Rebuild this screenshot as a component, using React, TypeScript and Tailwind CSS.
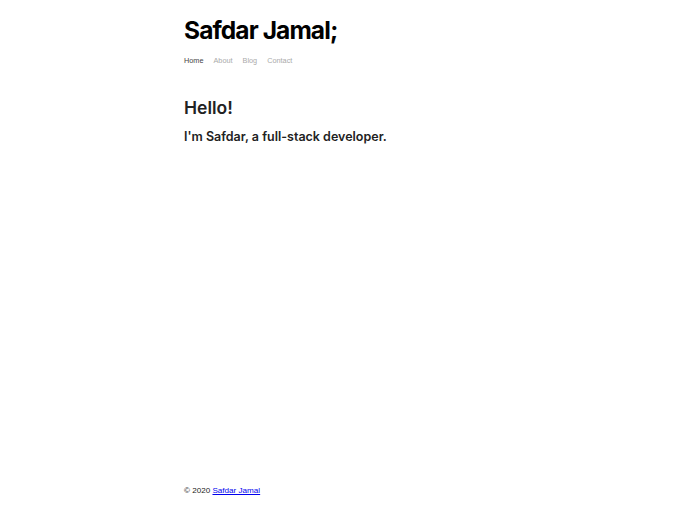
export default function App() {
  return (
    <div className="min-h-screen flex flex-col bg-white text-[#222]">
      <div className="w-[320px] mx-auto flex-1 flex flex-col">
        <header className="pt-[15px]">
          <h1 className="text-[24.5px] leading-[30px] font-bold text-black tracking-[-0.9px]" style={{ fontFamily: "Inter, sans-serif" }}>
            Safdar Jamal;
          </h1>
          <nav className="mt-[11px] flex gap-[10px] text-[7.3px] text-[#aaa]" style={{ fontFamily: '"Liberation Sans", Arial, sans-serif' }}>
            <a className="text-[#444]">Home</a>
            <a>About</a>
            <a>Blog</a>
            <a>Contact</a>
          </nav>
        </header>
        <main className="mt-[30px] flex-1" style={{ fontFamily: "Inter, sans-serif" }}>
          <h2 className="text-[17.5px] leading-[22px] font-semibold text-[#222]">Hello!</h2>
          <p className="mt-[10px] text-[12.5px] leading-[16px] font-semibold text-[#222]">I'm Safdar, a full-stack developer.</p>
        </main>
        <footer className="pb-[15px] text-[8.1px] text-[#222]" style={{ fontFamily: '"Liberation Sans", Arial, sans-serif' }}>
          © 2020 <a className="text-[#0000ee] underline">Safdar Jamal</a>
        </footer>
      </div>
    </div>
  );
}
